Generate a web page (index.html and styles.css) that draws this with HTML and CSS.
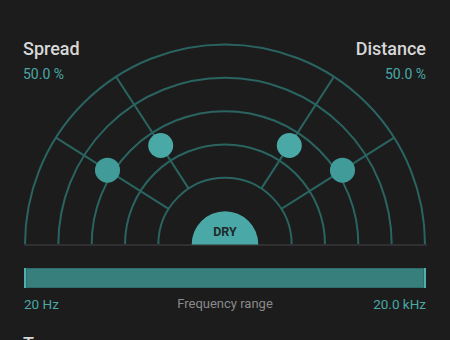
FILE: index.html
```html
<!DOCTYPE html>
<html lang="en">

<head>
    <meta charset="UTF-8">
    <meta name="viewport" content="width=device-width, initial-scale=1.0">
    <title>Spatial</title>
    <link rel="stylesheet" href="styles.css">
</head>

<body>
    <div class="panel">
        <div class="stage">
            <svg class="field" width="450" height="250" viewBox="0 0 450 250">
                <g class="arcs">
                    <path d="M25 244.5 A200 200 0 0 1 425 244.5" />
                    <path d="M58.33 244.5 A166.67 166.67 0 0 1 391.67 244.5" />
                    <path d="M91.67 244.5 A133.33 133.33 0 0 1 358.33 244.5" />
                    <path d="M125 244.5 A100 100 0 0 1 325 244.5" />
                    <path d="M158.33 244.5 A66.67 66.67 0 0 1 291.67 244.5" />
                    <line x1="188.7" y1="188.6" x2="116.1" y2="76.8" />
                    <line x1="168.6" y1="208.9" x2="55.9" y2="137.6" />
                    <line x1="261.3" y1="188.6" x2="333.9" y2="76.8" />
                    <line x1="281.4" y1="208.9" x2="394.1" y2="137.6" />
                </g>
                <rect class="floor" x="24" y="244" width="403" height="2" />
                <path class="dry" d="M191.67 244.5 A33.33 33.33 0 0 1 258.33 244.5 Z" />
                <text class="dry-label" x="225" y="235.5" text-anchor="middle">DRY</text>
                <circle class="knob" cx="160.7" cy="145.5" r="12.5" />
                <circle class="knob" cx="289.3" cy="145.5" r="12.5" />
                <circle class="knob low" cx="107.5" cy="170.2" r="12.5" />
                <circle class="knob low" cx="342.5" cy="170.2" r="12.5" />
            </svg>
            <div class="params">
                <div class="param">
                    <h2>Spread</h2>
                    <span class="value">50.0 %</span>
                </div>
                <div class="param right">
                    <h2>Distance</h2>
                    <span class="value">50.0 %</span>
                </div>
            </div>
        </div>

        <div class="range">
            <div class="range-bar"></div>
            <div class="range-labels">
                <span class="value">20 Hz</span>
                <span class="caption">Frequency range</span>
                <span class="value end">20.0 kHz</span>
            </div>
        </div>

        <h2 class="next">Tone</h2>
    </div>
</body>

</html>
```

FILE: styles.css
```css
* {
    margin: 0;
    padding: 0;
    box-sizing: border-box;
}

body {
    background: #1c1c1c;
    font-family: Roboto, "Liberation Sans", sans-serif;
    overflow: hidden;
}

.panel {
    width: 450px;
}

.stage {
    display: grid;
}

.stage > * {
    grid-area: 1 / 1;
}

.field {
    display: block;
}

.arcs path,
.arcs line {
    fill: none;
    stroke: #2a6461;
    stroke-width: 2;
}

.floor {
    fill: #303030;
}

.dry {
    fill: #4aa8a6;
}

.dry-label {
    font-family: Roboto, "Liberation Sans", sans-serif;
    font-size: 12.5px;
    font-weight: 700;
    fill: #1e2b2b;
}

.knob {
    fill: #4aa8a6;
}

.knob.low {
    fill: #419b99;
}

.params {
    display: flex;
    justify-content: space-between;
    align-items: flex-start;
    padding: 38px 24px 0 23px;
}

.param {
    display: flex;
    flex-direction: column;
    gap: 6px;
}

.param .value {
    font-size: 14px;
}

.param.right {
    align-items: flex-end;
}

h2 {
    font-size: 18px;
    line-height: 22px;
    font-weight: 500;
    color: #d7d7d7;
}

.value {
    font-size: 13.5px;
    line-height: 16px;
    color: #4aa8a6;
}

.range {
    padding: 18px 24px 0;
}

.range-bar {
    height: 20px;
    background: #377f7d;
    border-left: 2px solid #4fb0ae;
    border-right: 2px solid #4fb0ae;
    box-shadow: inset 0 0 0 1px #2f6e6c;
}

.range-labels {
    display: grid;
    grid-template-columns: 1fr auto 1fr;
    margin-top: 8px;
}

.range-labels .end {
    text-align: right;
}

.caption {
    font-size: 13px;
    line-height: 16px;
    color: #8a8a8a;
}

.next {
    margin: 21px 0 0 23px;
}
```
